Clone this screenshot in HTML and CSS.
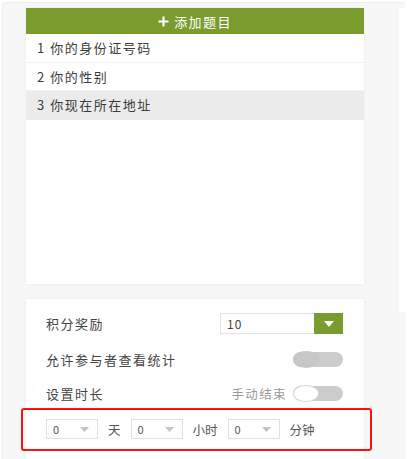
FILE: index.html
```html
<!DOCTYPE html>
<html lang="zh">
<head>
<meta charset="utf-8">
<link rel="stylesheet" href="styles.css">
</head>
<body>
<div class="frame">
  <div class="main">
    <section class="card list-card">
      <div class="add-btn">
        <svg class="plus" width="11" height="11" viewBox="0 0 11 11"><path d="M5.5 0.5v10M0.5 5.5h10" stroke="#fff" stroke-width="2.2"/></svg>
        <span>添加题目</span>
      </div>
      <div class="item">1 你的身份证号码</div>
      <div class="item">2 你的性别</div>
      <div class="item active">3 你现在所在地址</div>
    </section>
    <section class="card settings-card">
      <div class="row">
        <span class="label">积分奖励</span>
        <div class="select-green">
          <span class="val">10</span>
          <span class="btn"><svg width="10" height="6" viewBox="0 0 10 6"><path d="M0 0h10L5 6z" fill="#fff"/></svg></span>
        </div>
      </div>
      <div class="row">
        <span class="label">允许参与者查看统计</span>
        <span class="toggle"><span class="knob grey"></span></span>
      </div>
      <div class="row">
        <span class="label">设置时长</span>
        <div class="right">
          <span class="hint">手动结束</span>
          <span class="toggle"><span class="knob white"></span></span>
        </div>
      </div>
      <div class="time-row">
        <div class="mini-select"><span>0</span><svg width="9" height="5" viewBox="0 0 9 5"><path d="M0 0h9L4.5 5z" fill="#c4c4c4"/></svg></div>
        <span class="unit">天</span>
        <div class="mini-select"><span>0</span><svg width="9" height="5" viewBox="0 0 9 5"><path d="M0 0h9L4.5 5z" fill="#c4c4c4"/></svg></div>
        <span class="unit">小时</span>
        <div class="mini-select"><span>0</span><svg width="9" height="5" viewBox="0 0 9 5"><path d="M0 0h9L4.5 5z" fill="#c4c4c4"/></svg></div>
        <span class="unit">分钟</span>
      </div>
    </section>
  </div>
  <div class="side"></div>
</div>
</body>
</html>
```
FILE: styles.css
```css
* { box-sizing: border-box; }
html, body { margin: 0; padding: 0; background: #fff; overflow: hidden; }
body {
  font-family: "Noto Sans CJK SC", "Noto Sans", sans-serif;
  font-size: 13px;
  color: #444;
  width: 407px;
  height: 459px;
}
.frame {
  margin: 2px 0 0 2px;
  width: 403px;
  height: 457px;
  background: #f7f7f7;
  border-top: 1px solid #eeeeee;
  border-left: 1px solid #eeeeee;
  display: flex;
  align-items: flex-start;
}
.main {
  padding: 5px 0 0 23px;
  width: 361px;
  display: flex;
  flex-direction: column;
  gap: 15px;
}
.card {
  background: #fff;
  width: 338px;
  box-shadow: 0 0 3px rgba(0,0,0,0.06);
}
.list-card { height: 276px; }
.add-btn {
  height: 26px;
  background: #7a9b2e;
  color: #fff;
  display: flex;
  align-items: center;
  justify-content: center;
  gap: 5px;
  letter-spacing: 1.4px;
  font-size: 13px;
}
.plus { margin-top: 1px; }
.item {
  height: 28.5px;
  line-height: 28px;
  padding-left: 11px;
  letter-spacing: 1.5px;
  color: #3c3c3c;
  border-bottom: 1px solid #f2f2f2;
}
.item.active { background: #ebebeb; border-bottom: none; }
.settings-card {
  height: 170px;
  padding: 14px 21px 0 20px;
}
.row {
  height: 34px;
  display: flex;
  align-items: center;
  justify-content: space-between;
}
.row:first-child { height: 21px; margin-bottom: 8px; }
.label { letter-spacing: 1.5px; color: #444; }
.select-green {
  width: 123px;
  height: 21px;
  border: 1px solid #e2e2e2;
  display: flex;
  align-items: center;
  justify-content: space-between;
}
.select-green .val { padding-left: 6px; font-size: 12px; letter-spacing: 1px; }
.select-green .btn {
  width: 29px;
  height: 21px;
  margin: -1px -1px -1px 0;
  background: #7a9b2e;
  display: flex;
  align-items: center;
  justify-content: center;
}
.right { display: flex; align-items: center; gap: 6px; }
.hint { color: #999; letter-spacing: 1.4px; font-size: 12.5px; }
.toggle {
  width: 50px;
  height: 15px;
  border-radius: 8px;
  background: #cccccc;
  display: flex;
  align-items: center;
}
.knob {
  width: 26px;
  height: 17px;
  border-radius: 50%;
  flex: none;
}
.knob.grey { background: #c7c7c7; }
.knob.white { background: #fff; border: 1px solid #d8d8d8; }
.time-row {
  margin: -2px -29px 0 -25px;
  height: 43px;
  border: 2px solid #ff1010;
  border-radius: 3px;
  display: flex;
  align-items: center;
  padding-left: 23px;
  padding-bottom: 1px;
}
.mini-select {
  width: 52px;
  height: 20px;
  border: 1px solid #e0e0e0;
  display: flex;
  align-items: center;
  justify-content: space-between;
  padding: 0 8px 0 6px;
  font-size: 11px;
  color: #555;
}
.unit { margin: 0 10px; font-size: 12.5px; letter-spacing: 0; color: #555; }
.side {
  margin: 5px 0 0 35px;
  width: 11px;
  height: 304px;
  background: #fff;
  flex: none;
}
```
